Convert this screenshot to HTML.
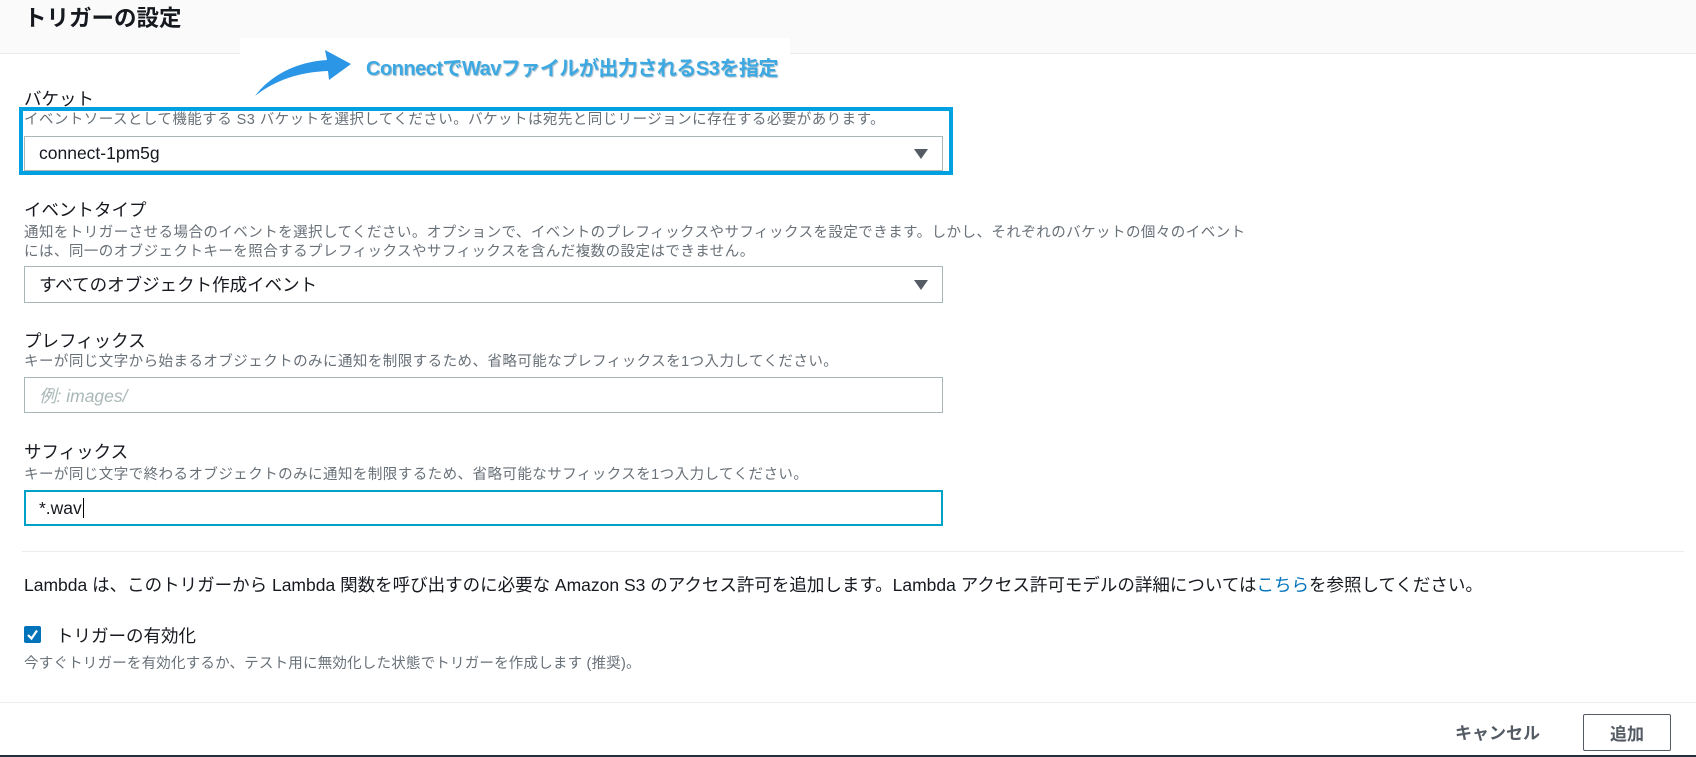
<!DOCTYPE html>
<html><head><meta charset="utf-8"><style>
*{margin:0;padding:0;box-sizing:border-box}
body{width:1696px;height:757px;background:#fff;position:relative;overflow:hidden;font-family:"Liberation Sans","Noto Sans CJK JP",sans-serif;color:#16191f}
.a{position:absolute;white-space:nowrap}
.lbl{font-size:17.5px;color:#16191f}
.help{font-size:14.5px;color:#687078;letter-spacing:0.45px}
.sel{position:absolute;left:24px;width:919px;border:1px solid #aab7b8;background:#fff;font-size:17.5px;padding-left:14px;display:flex;align-items:center}
.tri{position:absolute;right:14px;top:50%;margin-top:-5px;width:0;height:0;border-left:7px solid transparent;border-right:7px solid transparent;border-top:10px solid #545b64}
</style></head><body>
<div class="a" style="left:0;top:0;width:1696px;height:54px;background:#fafafa;border-bottom:1px solid #eaeded"></div>
<div class="a" style="left:24px;top:1px;font-size:22.5px;font-weight:bold;">トリガーの設定</div>

<div class="a" style="left:240px;top:38px;width:550px;height:40px;background:#fff"></div>
<svg class="a" style="left:245px;top:44px" width="120" height="60" viewBox="0 0 120 60">
<path d="M10 52 C25 32 50 18 82 16 L80 6 L106 20 L84 36 L83 27 C55 28 30 36 10 52 Z" fill="#2b95e6"/>
</svg>
<div class="a" style="left:366px;top:52px;font-size:20px;font-weight:bold;color:#3ca9e2;text-shadow:1px 1px 1px #9fb8c8;letter-spacing:-0.5px">ConnectでWavファイルが出力されるS3を指定</div>

<div class="a lbl" style="left:24px;top:86px">バケット</div>
<div class="a" style="left:19px;top:107px;width:934px;height:68px;border:4px solid #00a1e0"></div>
<div class="a help" style="left:24px;top:108px">イベントソースとして機能する S3 バケットを選択してください。バケットは宛先と同じリージョンに存在する必要があります。</div>
<div class="sel" style="top:136px;height:35px">connect-1pm5g<span class="tri"></span></div>

<div class="a lbl" style="left:24px;top:197px">イベントタイプ</div>
<div class="a help" style="left:24px;top:221px">通知をトリガーさせる場合のイベントを選択してください。オプションで、イベントのプレフィックスやサフィックスを設定できます。しかし、それぞれのバケットの個々のイベント</div>
<div class="a help" style="left:24px;top:240px">には、同一のオブジェクトキーを照合するプレフィックスやサフィックスを含んだ複数の設定はできません。</div>
<div class="sel" style="top:266px;height:37px">すべてのオブジェクト作成イベント<span class="tri"></span></div>

<div class="a lbl" style="left:24px;top:328px">プレフィックス</div>
<div class="a help" style="left:24px;top:350px">キーが同じ文字から始まるオブジェクトのみに通知を制限するため、省略可能なプレフィックスを1つ入力してください。</div>
<div class="sel" style="top:377px;height:36px;color:#aab7b8;font-style:italic">例: images/</div>

<div class="a lbl" style="left:24px;top:439px">サフィックス</div>
<div class="a help" style="left:24px;top:463px">キーが同じ文字で終わるオブジェクトのみに通知を制限するため、省略可能なサフィックスを1つ入力してください。</div>
<div class="sel" style="top:490px;height:36px;border:2px solid #00a1c9;padding-left:13px">*.wav<span style="display:inline-block;width:1px;height:20px;background:#000;margin-left:1px"></span></div>

<div class="a" style="left:22px;top:551px;width:1662px;height:1px;background:#eaeded"></div>
<div class="a" style="left:24px;top:572px;font-size:17.5px">Lambda は、このトリガーから Lambda 関数を呼び出すのに必要な Amazon S3 のアクセス許可を追加します。Lambda アクセス許可モデルの詳細については<span style="color:#0073bb">こちら</span>を参照してください。</div>

<div class="a" style="left:24px;top:626px;width:17px;height:17px;background:#0073bb;border-radius:2px"></div>
<svg class="a" style="left:24px;top:626px" width="17" height="17"><path d="M4 9 L7.5 12.5 L13 4.5" stroke="#fff" stroke-width="2.2" fill="none"/></svg>
<div class="a" style="left:56px;top:623px;font-size:17.5px">トリガーの有効化</div>
<div class="a help" style="left:24px;top:652px;letter-spacing:0.2px">今すぐトリガーを有効化するか、テスト用に無効化した状態でトリガーを作成します (推奨)。</div>

<div class="a" style="left:0;top:702px;width:1696px;height:1px;background:#eaeded"></div>
<div class="a" style="left:1455px;top:719px;font-size:17px;font-weight:bold;color:#545b64">キャンセル</div>
<div class="a" style="left:1583px;top:714px;width:88px;height:37px;border:1px solid #545b64;border-radius:2px;font-size:17px;font-weight:bold;color:#545b64;display:flex;align-items:center;justify-content:center">追加</div>
<div class="a" style="left:0;top:755px;width:1696px;height:2px;background:#232f3e"></div>
</body></html>
